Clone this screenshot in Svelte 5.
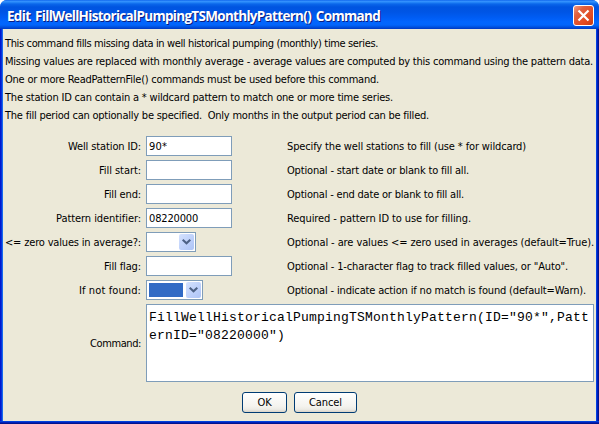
<script>
  const notes = [
    ['This command fills missing data in well historical pumping (monthly) time series.', 373],
    ['Missing values are replaced with monthly average - average values are computed by this command using the pattern data.', 588],
    ['One or more ReadPatternFile() commands must be used before this command.', 374],
    ['The station ID can contain a * wildcard pattern to match one or more time series.', 388],
    ['The fill period can optionally be specified.\u00a0 Only months in the output period can be filled.', 424]
  ];
  const rows = [
    { label: 'Well station ID:', lw: 73, kind: 'text', value: '90*', vw: 18, hint: 'Specify the well stations to fill (use * for wildcard)', hw: 239 },
    { label: 'Fill start:', lw: 42, kind: 'text', value: '', hint: 'Optional - start date or blank to fill all.', hw: 182 },
    { label: 'Fill end:', lw: 37, kind: 'text', value: '', hint: 'Optional - end date or blank to fill all.', hw: 177 },
    { label: 'Pattern identifier:', lw: 85, kind: 'text', value: '08220000', vw: 49, hint: 'Required - pattern ID to use for filling.', hw: 184 },
    { label: '<= zero values in average?:', lw: 136, kind: 'combo', width: 50, hint: 'Optional - are values <= zero used in averages (default=True).', hw: 307 },
    { label: 'Fill flag:', lw: 37, kind: 'text', value: '', hint: 'Optional - 1-character flag to track filled values, or "Auto".', hw: 281 },
    { label: 'If not found:', lw: 62, kind: 'combo', width: 57, focused: true, hint: 'Optional - indicate action if no match is found (default=Warn).', hw: 299 }
  ];
  // Spreads the tracking so that a string takes up the given width.
  function fit(node, width) {
    const natural = node.getBoundingClientRect().width;
    node.style.letterSpacing = `${(width - natural) / node.textContent.length}px`;
  }
</script>

<div class="window">
  <header>
    <h1><span use:fit={373}>Edit FillWellHistoricalPumpingTSMonthlyPattern() Command</span></h1>
    <button class="close" aria-label="Close">
      <svg width="21" height="21" viewBox="0 0 21 21">
        <defs>
          <linearGradient id="red" x1="0" y1="0" x2="1" y2="1">
            <stop offset="0" stop-color="#f0a08a" /><stop offset=".3" stop-color="#e0603f" />
            <stop offset=".7" stop-color="#e3491f" /><stop offset="1" stop-color="#c23a12" />
          </linearGradient>
        </defs>
        <rect x=".5" y=".5" width="20" height="20" rx="2.5" fill="url(#red)" stroke="#fff" />
        <path d="M5.5 5.5l10 10M15.5 5.5l-10 10" stroke="#fff" stroke-width="2.2" />
      </svg>
    </button>
  </header>
  <main>
    <div class="notes">
      {#each notes as [text, width]}
        <p><span use:fit={width}>{text}</span></p>
      {/each}
    </div>
    <div class="form">
      {#each rows as row}
        <div class="row">
          <div class="label"><span use:fit={row.lw}>{row.label}</span></div>
          <div class="cell">
            {#if row.kind === 'text'}
              <div class="field">{#if row.value}<span use:fit={row.vw}>{row.value}</span>{/if}</div>
            {:else}
              <div class="combo" style:width="{row.width}px">
                <div class="choice" class:focused={row.focused}></div>
                <div class="arrow">
                  <svg width="9" height="6" viewBox="0 0 9 6"><path d="M.7 .8L4.5 4.3L8.3 .8" fill="none" stroke="#4d6185" stroke-width="2.1" /></svg>
                </div>
              </div>
            {/if}
          </div>
          <div class="hint"><span use:fit={row.hw}>{row.hint}</span></div>
        </div>
      {/each}
      <div class="row command">
        <div class="label"><span use:fit={51}>Command:</span></div>
        <div class="area">FillWellHistoricalPumpingTSMonthlyPattern(ID="90*",PatternID="08220000")</div>
      </div>
    </div>
    <div class="actions">
      <button class="ok"><span use:fit={14}>OK</span></button>
      <button class="cancel"><span use:fit={33}>Cancel</span></button>
    </div>
  </main>
</div>

<style>
  :global(body) { background: #fff; }
  .window, .window * { box-sizing: border-box; }
  .window {
    width: 599px; height: 424px; display: flex; flex-direction: column; overflow: hidden;
    padding: 0 3px 3px; border-radius: 7px 7px 0 0;
    background:
      linear-gradient(90deg, #0019cf 0 1px, #0831d9 1px 2px, #166aee 2px 3px, transparent 3px 596px, #0140e0 596px 597px, #001dbe 597px 598px, #00138c 598px) 0 29px / 100% 392px no-repeat,
      linear-gradient(#0041dc 0 1px, #001fb8 1px 2px, #00138c 2px) 0 421px / 100% 3px no-repeat,
      #0054e3;
    color: #000; font: 11px/18px "DejaVu Sans Condensed", "DejaVu Sans", sans-serif; white-space: nowrap;
  }
  header {
    height: 29px; flex: none; display: flex; justify-content: space-between; margin: 0 -3px; padding: 5px 5px 0 7px;
    background: linear-gradient(#0058e6 0, #3a93ff 1px, #2a8cfa 2px, #0a66ea 4px, #0054e0 7px, #0055e5 12px, #005df5 18px, #0266fe 22px, #0265fb 25px, #0052e0 27px, #0038c0 29px);
  }
  h1 { margin: 0; color: #fff; font: bold 13.5px/22px "Open Sans", sans-serif; word-spacing: 2px; text-shadow: 1px 1px #0b1e80; }
  .close { width: 21px; height: 21px; padding: 0; border: 0; background: none; }
  .close svg { display: block; }
  main { flex: 1; min-height: 0; background: #ece9d8; display: flex; flex-direction: column; }
  .notes { padding: 6px 0 0 2px; height: 105px; }
  p { margin: 0; height: 18px; }
  .form { display: flex; flex-direction: column; gap: 4px; padding-top: 2px; }
  .row { height: 20px; display: flex; line-height: 22px; }
  .label { width: 138px; flex: none; display: flex; justify-content: flex-end; }
  .cell { width: 141px; margin-left: 5px; flex: none; }
  .field { width: 86px; height: 20px; border: 1px solid #7f9db9; background: #fff; padding-left: 2px; line-height: 20px; }
  .combo { height: 20px; border: 1px solid #7f9db9; background: #fff; display: flex; padding: 1px; gap: 3px; }
  .choice { flex: 1; margin: 1px 0 1px 1px; }
  .focused { background: #316ac5; }
  .arrow { width: 15px; height: 16px; border-radius: 2px; background: linear-gradient(135deg, #d5e2fe, #bccffa 60%, #aec4f5); display: flex; align-items: center; justify-content: center; }
  .command { height: 78px; line-height: 80px; }
  .area {
    width: 448px; margin-left: 5px; border: 1px solid #7f9db9; background: #fff; padding: 4px 3px 0 2px;
    font: 13px/18px "Liberation Mono", monospace; letter-spacing: .199px; white-space: normal; word-break: break-all;
  }
  .actions { display: flex; gap: 7px; padding: 10px 0 0 239px; }
  .ok, .cancel {
    height: 21px; padding: 0; border: 1px solid #003c74; border-radius: 3px; color: #000; font: inherit; line-height: 18px;
    background: linear-gradient(#fff, #f4f3ee 70%, #ecebe5 86%, #d9d3c8); text-align: center;
  }
  .ok { width: 45px; }
  .cancel { width: 63px; }
</style>
